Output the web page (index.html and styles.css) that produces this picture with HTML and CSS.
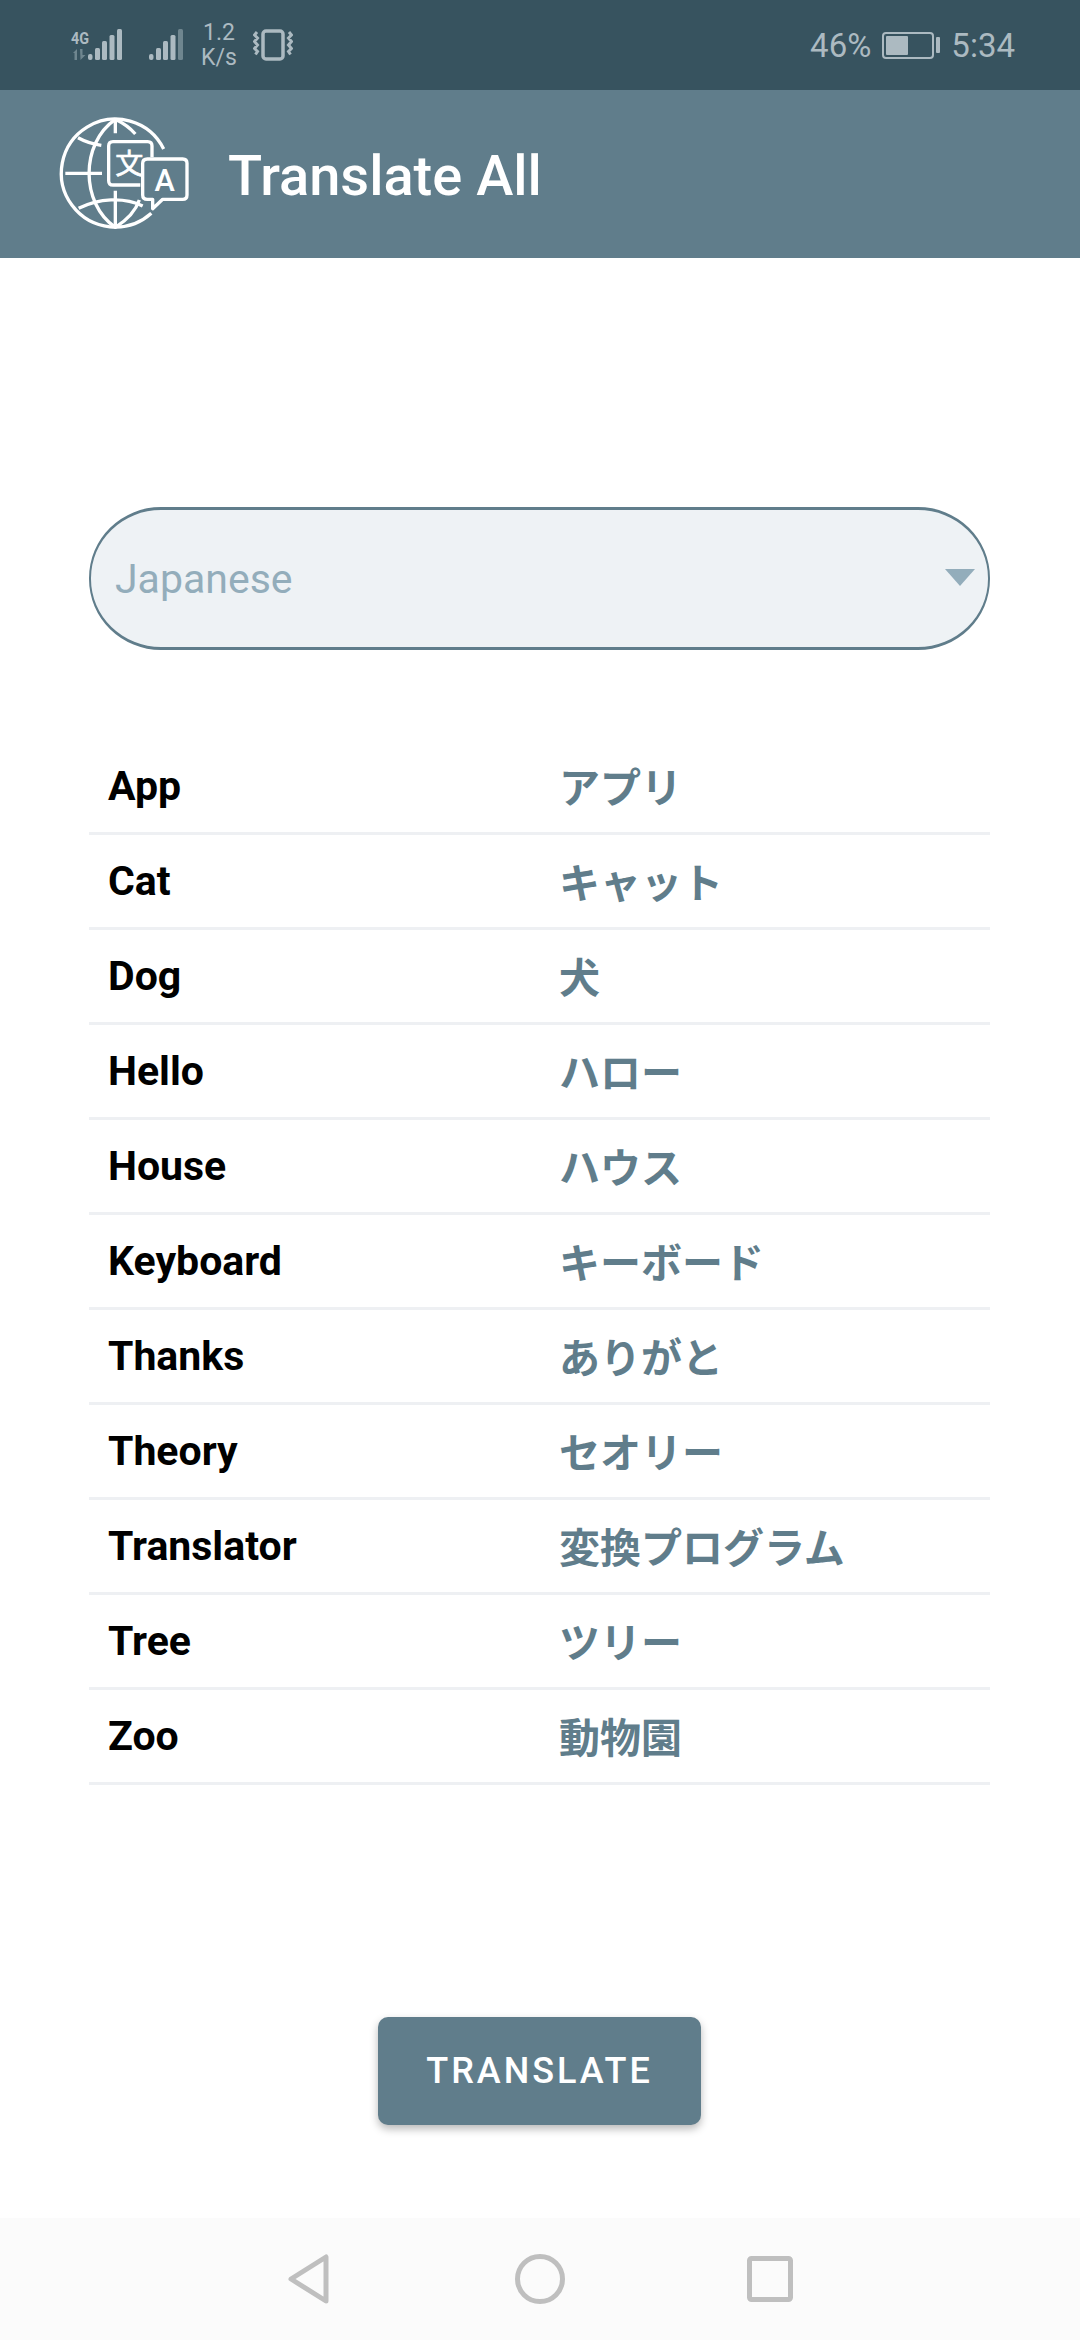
FILE: index.html
```html
<!DOCTYPE html>
<html lang="en">
<head>
<meta charset="utf-8">
<title>Translate All</title>
<link rel="stylesheet" href="styles.css">
</head>
<body>
<div class="screen">
  <header class="status">
    <div class="status-left">
      <svg class="sig1" viewBox="0 0 52 34" width="52" height="34">
        <text x="1" y="16" class="g4" textLength="18" lengthAdjust="spacingAndGlyphs">4G</text>
        <path class="dim" d="M3 25l4-4v11h-2.500v-7zM10 21h2.500v6l3 0-5 5z"/>
        <rect class="bar" x="18" y="26" width="4.500" height="6" rx="2"/>
        <rect class="bar" x="25" y="20" width="5" height="12" rx="1.500"/>
        <rect class="bar" x="32" y="13" width="5" height="19" rx="1.500"/>
        <rect class="bar" x="39.500" y="7" width="5" height="25" rx="1.500"/>
        <rect class="bar" x="47" y="1" width="5" height="31" rx="1.500"/>
      </svg>
      <svg class="sig2" viewBox="0 0 34 34" width="34" height="34">
        <rect class="bar" x="0" y="26" width="4.500" height="6" rx="2"/>
        <rect class="bar" x="7" y="20" width="5" height="12" rx="1.500"/>
        <rect class="bar" x="14" y="13" width="5" height="19" rx="1.500"/>
        <rect class="bar" x="21.500" y="7" width="5" height="25" rx="1.500"/>
        <rect class="dim" x="29" y="1" width="5" height="31" rx="1.500"/>
      </svg>
      <div class="speed"><span>1.2</span><span>K/s</span></div>
      <svg class="vib" viewBox="0 0 40 32" width="40" height="32">
        <rect class="vib-body" x="10" y="2" width="20" height="28" rx="3"/>
        <path class="vib-wave" d="M4 3l-2.500 3 3 3-3 3.500 3 3.500-3 3.500 3 3-2 3M36 3l2.500 3-3 3 3 3.500-3 3.500 3 3.500-3 3 2 3"/>
      </svg>
    </div>
    <div class="status-right">
      <span>46%</span>
      <div class="battery"><div class="battery-body"><div class="battery-fill"></div></div><div class="battery-tip"></div></div>
      <span>5:34</span>
    </div>
  </header>

  <div class="appbar">
    <svg class="logo" viewBox="0 0 450 450" width="150" height="150">
      <g class="logo-line">
        <path d="M335 147A162 162 0 1 0 298 340"/>
        <path d="M190 58C85 130 85 310 190 382C225 360 250 335 262 300"/>
        <path d="M190 58C215 70 235 85 250 102"/>
        <path d="M190 58V100M190 272V382M40 220H150"/>
        <path d="M78 113C100 125 122 132 148 136"/>
        <path d="M80 325C140 295 215 290 272 318"/>
        <path d="M300 172V138Q300 125 287 125H183Q170 125 170 138V242Q170 255 183 255H265"/>
        <path d="M286 177H392Q405 177 405 190V285Q405 298 392 298H332L302 326V298H286Q272 298 272 285V190Q272 177 286 177Z"/>
      </g>
      <text class="logo-zh" x="232" y="222">文</text>
      <text class="logo-a" x="338" y="274">A</text>
    </svg>
    <h1 class="title">Translate All</h1>
  </div>

  <main class="content">
    <div class="select">
      <span class="select-value">Japanese</span>
      <span class="select-arrow"></span>
    </div>
    <div class="list">
      <div class="row"><span class="word">App</span><span class="trans">アプリ</span></div>
      <div class="row"><span class="word">Cat</span><span class="trans">キャット</span></div>
      <div class="row"><span class="word">Dog</span><span class="trans">犬</span></div>
      <div class="row"><span class="word">Hello</span><span class="trans">ハロー</span></div>
      <div class="row"><span class="word">House</span><span class="trans">ハウス</span></div>
      <div class="row"><span class="word">Keyboard</span><span class="trans">キーボード</span></div>
      <div class="row"><span class="word">Thanks</span><span class="trans">ありがと</span></div>
      <div class="row"><span class="word">Theory</span><span class="trans">セオリー</span></div>
      <div class="row"><span class="word">Translator</span><span class="trans">変換プログラム</span></div>
      <div class="row"><span class="word">Tree</span><span class="trans">ツリー</span></div>
      <div class="row"><span class="word">Zoo</span><span class="trans">動物園</span></div>
    </div>
    <div class="actions"><button class="btn">TRANSLATE</button></div>
  </main>

  <nav class="navbar">
    <svg class="nav-back" viewBox="0 0 42 50" width="42" height="50"><path d="M38 3V47L3 25Z"/></svg>
    <svg class="nav-home" viewBox="0 0 50 50" width="50" height="50"><circle cx="25" cy="25" r="22.500"/></svg>
    <svg class="nav-recent" viewBox="0 0 46 46" width="46" height="46"><rect x="2.500" y="2.500" width="41" height="41" rx="2"/></svg>
  </nav>
</div>
</body>
</html>
```
FILE: styles.css
```css
* { box-sizing: border-box; }
html, body { margin: 0; padding: 0; background: #fff; }
body { font-family: Roboto, "Noto Sans CJK JP", sans-serif; }
.screen { width: 1080px; height: 2340px; display: flex; flex-direction: column; overflow: hidden; }

.status { height: 90px; flex: none; background: #37535f; color: #acbac1; display: flex; align-items: center; justify-content: space-between; padding: 0 0 0 70px; }
.status-left { display: flex; align-items: center; height: 100%; }
.sig1 { overflow: visible; }
.sig2 { margin-left: 27px; }
.speed { margin-left: 19px; width: 34px; display: flex; flex-direction: column; align-items: center; font-size: 23px; line-height: 25px; white-space: nowrap; }
.vib { margin-left: 17px; }
.g4 { font: 700 17px Roboto, sans-serif; fill: #acbac1; }
.bar { fill: #acbac1; }
.dim { fill: #6f868f; }
.vib-body { fill: none; stroke: #acbac1; stroke-width: 3.500; }
.vib-wave { fill: none; stroke: #acbac1; stroke-width: 3; }
.status-right { display: flex; align-items: center; font-size: 33px; padding-right: 65px; }
.battery { display: flex; align-items: center; margin: 0 11px 0 11px; }
.battery-body { width: 52px; height: 27px; border: 2px solid #acbac1; border-radius: 4px; padding: 2px; }
.battery-fill { width: 46%; height: 100%; min-width: 22px; background: #acbac1; border-radius: 1px; }
.battery-tip { width: 4px; height: 16px; margin-left: 2px; background: #acbac1; border-radius: 1px; }

.appbar { height: 168px; flex: none; background: #607d8b; display: flex; align-items: center; padding-left: 52px; }
.logo { flex: none; margin-top: 2px; }
.logo-line { fill: none; stroke: #fff; stroke-width: 10; stroke-linejoin: round; }
.logo-zh { font: 400 84px "Noto Sans CJK JP", sans-serif; fill: #fff; stroke: #fff; stroke-width: 2; text-anchor: middle; }
.logo-a { font: 500 92px Roboto, sans-serif; fill: #fff; text-anchor: middle; }
.title { margin: 3px 0 0 26px; color: #fff; font-size: 56px; font-weight: 500; }

.content { flex: 1; display: flex; flex-direction: column; padding: 249px 90px 0 89px; }
.select { height: 143px; flex: none; display: flex; align-items: center; justify-content: space-between; background: #eef2f5; border: 3px solid #607d8b; border-left-width: 2px; border-right-width: 2px; border-radius: 72px / 71px; padding: 0 13px 0 24px; }
.select-value { font-size: 41px; color: #93adbb; }
.select-arrow { width: 0; height: 0; border-left: 15px solid transparent; border-right: 15px solid transparent; border-top: 17px solid #93adbb; margin-bottom: 2px; }

.list { margin-top: 90px; display: flex; flex-direction: column; }
.row { height: 95px; display: flex; align-items: center; border-bottom: 3px solid #eef0f3; padding-left: 19px; }
.word { width: 451px; flex: none; font-size: 41px; font-weight: 700; color: #000; }
.trans { font-size: 41px; font-weight: 700; color: #607d8b; font-family: "Noto Sans CJK JP", sans-serif; padding-bottom: 3px; }

.actions { display: flex; justify-content: center; margin-top: 232px; }
.btn { width: 323px; height: 108px; background: #607d8b; color: #fff; border: 0; border-radius: 10px; font: 500 36px Roboto, sans-serif; letter-spacing: 3px; box-shadow: 0 4px 8px rgba(0,0,0,.28); }

.navbar { height: 122px; flex: none; background: #fbfbfb; display: flex; align-items: center; justify-content: flex-start; padding-left: 288px; }
.nav-home { margin-left: 185px; }
.nav-recent { margin-left: 182px; }
.nav-back path, .nav-home circle, .nav-recent rect { fill: none; stroke: #bfbfbf; stroke-width: 5; stroke-linejoin: round; }
```
